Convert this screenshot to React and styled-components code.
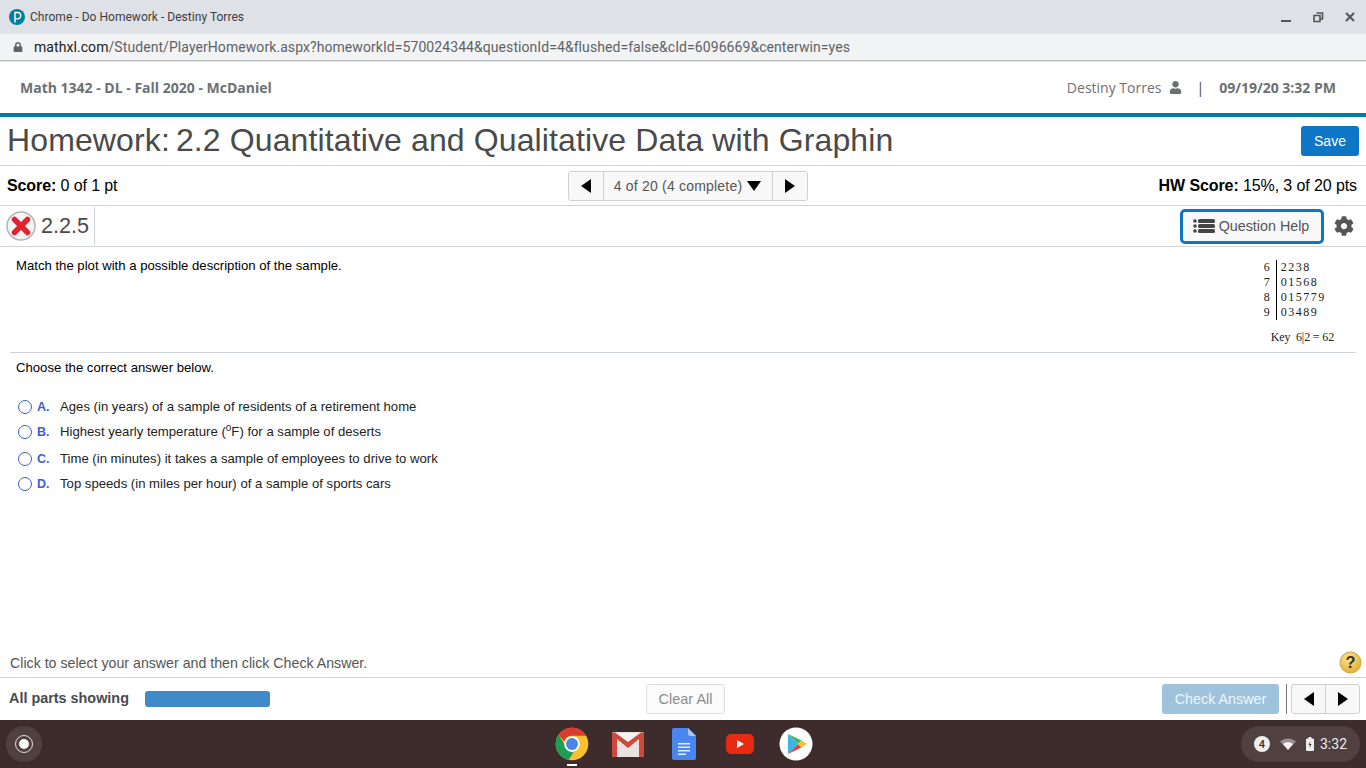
import React from "react";
import styled, { createGlobalStyle } from "styled-components";
import { FaCog, FaUser, FaLock } from "react-icons/fa";

const stems = [
  ["6", "2238"],
  ["7", "01568"],
  ["8", "015779"],
  ["9", "03489"],
];

function Triangle({ dir }) {
  const points = { left: "11,0 11,14 1,7", right: "1,0 1,14 11,7", down: "1,2 15,2 8,12" };
  return (
    <svg width={dir === "down" ? 16 : 12} height="14" viewBox={dir === "down" ? "0 0 16 14" : "0 0 12 14"}>
      <polygon points={points[dir]} fill="#000" />
    </svg>
  );
}

function PearsonLogo() {
  return (
    <svg width="16" height="16" viewBox="0 0 16 16">
      <circle cx="8" cy="8" r="8" fill="#007fa3" />
      <path d="M6 13.5V3.5h2.5a3.2 3.2 0 0 1 0 6.4H6" fill="none" stroke="#fff" strokeWidth="1.4" />
    </svg>
  );
}

function WrongIcon() {
  return (
    <svg width="30" height="30" viewBox="0 0 30 30">
      <circle cx="15" cy="15" r="14" fill="#f4f4f4" stroke="#b5b5b5" strokeWidth="1.5" />
      <path d="M8.5 8.5l13 13M21.5 8.5l-13 13" stroke="#e1232e" strokeWidth="5.5" strokeLinecap="round" />
    </svg>
  );
}

function HelpListIcon() {
  return (
    <svg width="22" height="16" viewBox="0 0 22 16">
      <g fill="#444">
        <circle cx="2" cy="3" r="1.8" />
        <circle cx="2" cy="8" r="1.8" />
        <circle cx="2" cy="13" r="1.8" />
        <rect x="5" y="1" width="17" height="4" rx="1.6" />
        <rect x="5" y="6" width="17" height="4" rx="1.6" />
        <rect x="5" y="11" width="17" height="4" rx="1.6" />
      </g>
    </svg>
  );
}

function HelpBubble() {
  return (
    <svg width="23" height="23" viewBox="0 0 24 24">
      <defs>
        <radialGradient id="hb" cx="0.4" cy="0.3" r="0.8">
          <stop offset="0" stopColor="#fbe48d" />
          <stop offset="1" stopColor="#e3a92c" />
        </radialGradient>
      </defs>
      <circle cx="12" cy="12" r="11" fill="url(#hb)" stroke="#c9a04a" />
      <text x="12" y="18" textAnchor="middle" fontFamily="Liberation Sans" fontWeight="700" fontSize="17" fill="#333">?</text>
    </svg>
  );
}

function ChromeIcon() {
  return (
    <svg width="34" height="34" viewBox="0 0 48 48">
      <circle cx="24" cy="24" r="23" fill="#fbc02d" />
      <path d="M24 1a23 23 0 0 1 20 11.5H24a11.5 11.5 0 0 0-11 8L5.2 10.6A23 23 0 0 1 24 1z" fill="#db3a2f" />
      <path d="M5.2 10.6L15 27.5a11 11 0 0 0 11 8L19.5 46.6A23 23 0 0 1 5.2 10.6z" fill="#1f9d55" />
      <circle cx="24" cy="24" r="11" fill="#fff" />
      <circle cx="24" cy="24" r="8.5" fill="#4a86e8" />
    </svg>
  );
}

function GmailIcon() {
  return (
    <svg width="34" height="28" viewBox="0 0 34 28">
      <rect x="1" y="2" width="32" height="25" rx="2" fill="#e6e3e1" />
      <path d="M3 3l14 12L31 3" fill="#f5f3f1" />
      <path d="M1 4v21a2 2 0 0 0 2 2h3V9l11 9 11-9v18h3a2 2 0 0 0 2-2V4a2 2 0 0 0-3-1.5L17 12 4 2.5A2 2 0 0 0 1 4z" fill="#cf4a3c" />
    </svg>
  );
}

function DocsIcon() {
  return (
    <svg width="24" height="32" viewBox="0 0 24 32">
      <path d="M2 0h14l8 8v22a2 2 0 0 1-2 2H2a2 2 0 0 1-2-2V2a2 2 0 0 1 2-2z" fill="#4a86f0" />
      <path d="M16 0l8 8h-6a2 2 0 0 1-2-2z" fill="#a9c6f7" />
      <path d="M6 15h12v1.5H6zM6 18.5h12V20H6zM6 22h12v1.5H6zM6 25.5h8V27H6z" fill="#e4edfd" />
    </svg>
  );
}

function YoutubeIcon() {
  return (
    <svg width="28" height="20" viewBox="0 0 28 20">
      <rect width="28" height="20" rx="5" fill="#e62b12" />
      <polygon points="11,6 11,14 18,10" fill="#fff" />
    </svg>
  );
}

function PlayIcon() {
  return (
    <svg width="34" height="34" viewBox="0 0 34 34">
      <circle cx="17" cy="17" r="16.5" fill="#fff" />
      <polygon points="9,7 9,27 19,17" fill="#3bb4e8" />
      <polygon points="9,7 19,17 22.5,13.5" fill="#37b56a" />
      <polygon points="9,27 19,17 22.5,20.5" fill="#e5413c" />
      <polygon points="22.5,13.5 19,17 22.5,20.5 28,17" fill="#fbc02d" />
    </svg>
  );
}

function WifiIcon() {
  return (
    <svg width="16" height="12" viewBox="0 0 16 12">
      <path d="M0 3.5a12 12 0 0 1 16 0L8 12z" fill="#9b8f8f" />
      <path d="M3 6a8 8 0 0 1 10 0L8 12z" fill="#f2f0f0" />
    </svg>
  );
}

function BatteryIcon() {
  return (
    <svg width="8" height="14" viewBox="0 0 8 14">
      <path d="M2.5 0h3v1.5H7a1 1 0 0 1 1 1V13a1 1 0 0 1-1 1H1a1 1 0 0 1-1-1V2.5a1 1 0 0 1 1-1h1.5z" fill="#eee" />
      <path d="M4.5 4L2.5 8H4l-.5 3 2-4H4z" fill="#3e2c2c" />
    </svg>
  );
}

export default function App() {
  const options = [
    { letter: "A", text: "Ages (in years) of a sample of residents of a retirement home", gap: 0 },
    { letter: "B", text: <>Highest yearly temperature (<Sup>o</Sup>F) for a sample of deserts</>, gap: 0 },
    { letter: "C", text: "Time (in minutes) it takes a sample of employees to drive to work", gap: 2 },
    { letter: "D", text: "Top speeds (in miles per hour) of a sample of sports cars", gap: 0 },
  ];

  return (
    <Page>
      <GlobalStyle />
      <TitleBar>
        <PearsonLogo />
        <WindowTitle>Chrome - Do Homework - Destiny Torres</WindowTitle>
        <WindowButtons>
          <svg width="12" height="12" viewBox="0 0 12 12"><rect x="1" y="9" width="10" height="2" fill="#555" /></svg>
          <svg width="12" height="12" viewBox="0 0 12 12"><path d="M4.5 2h6v6H8M2 4.5h6v6H2z" fill="none" stroke="#555" strokeWidth="1.6" /></svg>
          <svg width="12" height="12" viewBox="0 0 12 12"><path d="M2 2l8 8M10 2l-8 8" stroke="#555" strokeWidth="2" /></svg>
        </WindowButtons>
      </TitleBar>
      <UrlBar>
        <FaLock size={10} color="#5f6368" />
        <Url>
          mathxl.com<UrlPath>/Student/PlayerHomework.aspx?homeworkId=570024344&amp;questionId=4&amp;flushed=false&amp;cId=6096669&amp;centerwin=yes</UrlPath>
        </Url>
      </UrlBar>

      <CourseBar>
        <CourseName>Math 1342 - DL - Fall 2020 - McDaniel</CourseName>
        <UserBox>
          <UserName>Destiny Torres</UserName>
          <FaUser size={13} color="#6d7072" />
          <Pipe>|</Pipe>
          <CourseName>09/19/20 3:32 PM</CourseName>
        </UserBox>
      </CourseBar>

      <TitleRow>
        <HomeworkTitle>
          <span>Homework:</span>
          <span>2.2 Quantitative and Qualitative Data with Graphin</span>
        </HomeworkTitle>
        <SaveButton>Save</SaveButton>
      </TitleRow>

      <ScoreRow>
        <ScoreText><b>Score:</b> 0 of 1 pt</ScoreText>
        <Pager>
          <PagerButton><Triangle dir="left" /></PagerButton>
          <PagerLabel>4 of 20 (4 complete) <Triangle dir="down" /></PagerLabel>
          <PagerButton><Triangle dir="right" /></PagerButton>
        </Pager>
        <ScoreText><b>HW Score:</b> 15%, 3 of 20 pts</ScoreText>
      </ScoreRow>

      <QuestionRow>
        <QuestionId>
          <WrongIcon />
          <QuestionNumber>2.2.5</QuestionNumber>
        </QuestionId>
        <HelpTools>
          <HelpButton><HelpListIcon /> Question Help</HelpButton>
          <FaCog size={20} color="#555" />
        </HelpTools>
      </QuestionRow>

      <Main>
        <Stem>
          <StemText>Match the plot with a possible description of the sample.</StemText>
          <PlotBox>
            <PlotTable>
              {stems.map(([stem, leaves]) => (
                <PlotRow key={stem}>
                  <StemCell>{stem}</StemCell>
                  <LeafCell>{leaves}</LeafCell>
                </PlotRow>
              ))}
            </PlotTable>
            <PlotKey>Key&nbsp; 6|2 = 62</PlotKey>
          </PlotBox>
        </Stem>
        <Answers>
          <Prompt>Choose the correct answer below.</Prompt>
          <OptionList>
            {options.map((o) => (
              <OptionRow key={o.letter} $gap={o.gap}>
                <Radio />
                <Letter>{o.letter}.</Letter>
                <span>{o.text}</span>
              </OptionRow>
            ))}
          </OptionList>
        </Answers>
      </Main>

      <HintRow>
        <HintText>Click to select your answer and then click Check Answer.</HintText>
        <HelpBubble />
      </HintRow>

      <ActionBar>
        <PartsBox>
          <PartsLabel>All parts showing</PartsLabel>
          <ProgressBar />
        </PartsBox>
        <ClearButton>Clear All</ClearButton>
        <ActionsRight>
          <CheckButton>Check Answer</CheckButton>
          <Divider />
          <SmallPager>
            <SmallPagerButton><Triangle dir="left" /></SmallPagerButton>
            <SmallPagerButton><Triangle dir="right" /></SmallPagerButton>
          </SmallPager>
        </ActionsRight>
      </ActionBar>

      <Shelf>
        <Launcher><LauncherDot /></Launcher>
        <ShelfApps>
          <ShelfApp $active><ChromeIcon /></ShelfApp>
          <ShelfApp><GmailIcon /></ShelfApp>
          <ShelfApp><DocsIcon /></ShelfApp>
          <ShelfApp><YoutubeIcon /></ShelfApp>
          <ShelfApp><PlayIcon /></ShelfApp>
        </ShelfApps>
        <StatusTray>
          <NotifyCount>4</NotifyCount>
          <WifiIcon />
          <BatteryIcon />
          <Clock>3:32</Clock>
        </StatusTray>
      </Shelf>
    </Page>
  );
}

const GlobalStyle = createGlobalStyle`
  html, body {
    margin: 0;
    padding: 0;
    background: #fff;
    overflow: hidden;
  }
  * {
    box-sizing: border-box;
  }
`;

const Sup = styled.sup`
  font-size: 10px;
  line-height: 0;
`;

const Page = styled.div`
  width: 1366px;
  height: 768px;
  display: flex;
  flex-direction: column;
  font-family: "Liberation Sans", Arial, sans-serif;
  color: #000;
`;

const TitleBar = styled.div`
  height: 34px;
  flex: none;
  background: #dee1e6;
  display: flex;
  align-items: center;
  padding: 0 10px 0 9px;
`;
const WindowTitle = styled.div`
  margin-left: 5px;
  font-family: Roboto, sans-serif;
  font-size: 12px;
  letter-spacing: 0.03px;
  color: #3c4043;
`;
const WindowButtons = styled.div`
  margin-left: auto;
  display: flex;
  align-items: center;
  gap: 20px;
`;
const UrlBar = styled.div`
  height: 28px;
  flex: none;
  background: #f1f3f4;
  border-bottom: 1px solid #e6e6e6;
  box-shadow: inset 0 -1px 0 #b9babb;
  padding: 0 0 2px 13px;
  display: flex;
  align-items: center;
`;
const Url = styled.div`
  margin-left: 11px;
  font-family: Roboto, sans-serif;
  font-size: 14px;
  letter-spacing: 0.07px;
  color: #202124;
`;
const UrlPath = styled.span`
  color: #5f6368;
`;

const CourseBar = styled.div`
  height: 55px;
  flex: none;
  border-bottom: 4px solid #007fa3;
  display: flex;
  justify-content: space-between;
  align-items: center;
  padding: 0 30px 0 20px;
  font-family: "Open Sans", sans-serif;
`;
const CourseName = styled.div`
  font-size: 14px;
  font-weight: 700;
  color: #6d7072;
`;
const UserBox = styled.div`
  display: flex;
  align-items: center;
`;
const UserName = styled.div`
  font-size: 14px;
  color: #6d7072;
  margin-right: 8px;
`;
const Pipe = styled.div`
  margin: 0 15px 0 14px;
  font-size: 14px;
  color: #444;
`;

const TitleRow = styled.div`
  height: 49px;
  flex: none;
  border-bottom: 1px solid #cdd2dc;
  display: flex;
  justify-content: space-between;
  align-items: center;
  padding: 0 7px;
`;
const HomeworkTitle = styled.div`
  display: flex;
  gap: 6px;
  margin-bottom: 2px;
  font-size: 32px;
  letter-spacing: 0.12px;
  color: #4a4a4a;
  white-space: nowrap;
`;
const SaveButton = styled.div`
  width: 58px;
  height: 30px;
  background: #0e76c6;
  border-radius: 3px;
  color: #fff;
  font-size: 14px;
  display: flex;
  align-items: center;
  justify-content: center;
`;

const ScoreRow = styled.div`
  height: 40px;
  flex: none;
  border-bottom: 1px solid #cdd2dc;
  display: grid;
  grid-template-columns: 1fr auto 1fr;
  align-items: center;
  padding: 0 9px 0 7px;
  & > :last-child {
    justify-self: end;
  }
`;
const ScoreText = styled.div`
  font-size: 16px;
  letter-spacing: -0.1px;
`;
const Pager = styled.div`
  display: flex;
  height: 30px;
  width: 240px;
  margin-left: 12px;
  border: 1px solid #d0d0d0;
  border-radius: 3px;
  background: #f8f8f8;
`;
const PagerButton = styled.div`
  width: 34px;
  display: flex;
  align-items: center;
  justify-content: center;
`;
const PagerLabel = styled.div`
  flex: 1;
  border-left: 1px solid #d0d0d0;
  border-right: 1px solid #d0d0d0;
  display: flex;
  align-items: center;
  justify-content: center;
  gap: 4px;
  font-size: 14px;
  letter-spacing: 0.2px;
  color: #555;
`;

const QuestionRow = styled.div`
  height: 41px;
  flex: none;
  border-bottom: 1px solid #cdd2dc;
  display: flex;
  justify-content: space-between;
  align-items: center;
  padding: 0 12px 0 6px;
`;
const QuestionId = styled.div`
  height: 38px;
  display: flex;
  align-items: center;
  gap: 5px;
  padding-right: 5px;
  border-right: 1px solid #cdd2dc;
`;
const QuestionNumber = styled.div`
  font-size: 21.6px;
  color: #4a4a4a;
`;
const HelpTools = styled.div`
  display: flex;
  align-items: center;
  gap: 10px;
`;
const HelpButton = styled.div`
  width: 144px;
  height: 35px;
  padding-right: 2px;
  border: 3px solid #0e76c6;
  border-radius: 5px;
  background: #f8f8f8;
  display: flex;
  align-items: center;
  justify-content: center;
  gap: 4px;
  font-size: 14.3px;
  color: #555;
`;

const Main = styled.div`
  flex: 1;
  padding: 0 10px;
`;
const Stem = styled.div`
  height: 106px;
  border-bottom: 1px solid #cdd2dc;
  display: flex;
  justify-content: space-between;
  padding: 11px 22px 0 6px;
  font-size: 13.15px;
`;
const StemText = styled.div`
  line-height: 15px;
`;
const PlotBox = styled.div`
  font-family: "Liberation Serif", serif;
  font-size: 12px;
  color: #222;
  padding-top: 2px;
`;
const PlotTable = styled.div`
  display: flex;
  flex-direction: column;
`;
const PlotRow = styled.div`
  display: flex;
  height: 15px;
  line-height: 15px;
`;
const StemCell = styled.div`
  width: 14px;
  padding-right: 6px;
  text-align: right;
  border-right: 1px solid #000;
`;
const LeafCell = styled.div`
  padding-left: 4px;
  letter-spacing: 1.5px;
`;
const PlotKey = styled.div`
  margin: 10px 0 0 8px;
  letter-spacing: -0.15px;
  white-space: nowrap;
`;

const Answers = styled.div`
  padding: 7px 6px;
  font-size: 13.15px;
`;
const Prompt = styled.div`
  line-height: 15px;
  margin-bottom: 19px;
`;
const OptionList = styled.div`
  display: flex;
  flex-direction: column;
`;
const OptionRow = styled.div`
  height: 25px;
  margin-top: ${(props) => props.$gap}px;
  display: flex;
  align-items: center;
  margin-left: 2px;
  color: #222;
`;
const Radio = styled.div`
  width: 14px;
  height: 14px;
  border: 1px solid #3d5fd0;
  border-radius: 50%;
  background: #fff;
`;
const Letter = styled.div`
  width: 23px;
  margin-left: 5px;
  font-size: 12.5px;
  font-weight: 700;
  color: #3d5fd0;
`;

const HintRow = styled.div`
  height: 30px;
  flex: none;
  border-bottom: 1px solid #cdd2dc;
  display: flex;
  justify-content: space-between;
  align-items: center;
  padding: 0 4px 0 10px;
`;
const HintText = styled.div`
  font-size: 14.2px;
  color: #555;
`;

const ActionBar = styled.div`
  height: 42px;
  flex: none;
  display: grid;
  grid-template-columns: 1fr auto 1fr;
  align-items: center;
  padding: 0 6px 0 9px;
`;
const PartsBox = styled.div`
  display: flex;
  align-items: center;
  gap: 16px;
`;
const PartsLabel = styled.div`
  font-size: 14.4px;
  font-weight: 700;
  color: #4a4a4a;
  padding-bottom: 2px;
`;
const ProgressBar = styled.div`
  width: 125px;
  height: 16px;
  background: #418aca;
  border-radius: 3px;
`;
const ClearButton = styled.div`
  width: 79px;
  height: 30px;
  margin-left: 2px;
  border: 1px solid #dedede;
  border-radius: 3px;
  background: #fbfbfb;
  color: #8c8c8c;
  font-size: 14.5px;
  display: flex;
  align-items: center;
  justify-content: center;
`;
const ActionsRight = styled.div`
  display: flex;
  align-items: center;
  justify-content: flex-end;
`;
const CheckButton = styled.div`
  width: 117px;
  height: 30px;
  background: #9fc3dd;
  border-radius: 3px;
  color: #eef5fa;
  font-size: 14.3px;
  display: flex;
  align-items: center;
  justify-content: center;
`;
const Divider = styled.div`
  width: 1px;
  height: 30px;
  background: #777;
  margin: 0 4px 0 7px;
`;
const SmallPager = styled.div`
  display: flex;
  width: 69px;
  height: 30px;
  border: 1px solid #d0d0d0;
  border-radius: 3px;
  background: #f8f8f8;
`;
const SmallPagerButton = styled.div`
  flex: 1;
  display: flex;
  align-items: center;
  justify-content: center;
  & + & {
    border-left: 1px solid #d0d0d0;
  }
`;

const Shelf = styled.div`
  height: 48px;
  flex: none;
  background: #3e2c2c;
  display: grid;
  grid-template-columns: 1fr auto 1fr;
  align-items: center;
  padding: 0 6px;
`;
const Launcher = styled.div`
  width: 36px;
  height: 36px;
  border-radius: 50%;
  background: #514040;
  display: flex;
  align-items: center;
  justify-content: center;
`;
const LauncherDot = styled.div`
  width: 16px;
  height: 16px;
  border-radius: 50%;
  background: #fff;
  border: 3px solid #514040;
  outline: 1px solid #ddd;
`;
const ShelfApps = styled.div`
  display: flex;
  align-items: center;
  padding-left: 2px;
`;
const ShelfApp = styled.div`
  position: relative;
  width: 56px;
  height: 48px;
  display: flex;
  align-items: center;
  justify-content: center;
  &::after {
    content: "";
    display: ${(props) => (props.$active ? "block" : "none")};
    position: absolute;
    left: 23px;
    bottom: 2px;
    width: 10px;
    height: 2px;
    background: #fff;
  }
`;
const StatusTray = styled.div`
  justify-self: end;
  width: 119px;
  height: 36px;
  border-radius: 18px;
  background: #514040;
  display: flex;
  align-items: center;
  gap: 10px;
  padding-left: 13px;
`;
const NotifyCount = styled.div`
  width: 16px;
  height: 16px;
  border-radius: 50%;
  background: #eee;
  color: #3e2c2c;
  font-family: Roboto, sans-serif;
  font-size: 11px;
  font-weight: 500;
  display: flex;
  align-items: center;
  justify-content: center;
`;
const Clock = styled.div`
  margin-left: -4px;
  font-family: Roboto, sans-serif;
  font-size: 14px;
  color: #eee;
`;
